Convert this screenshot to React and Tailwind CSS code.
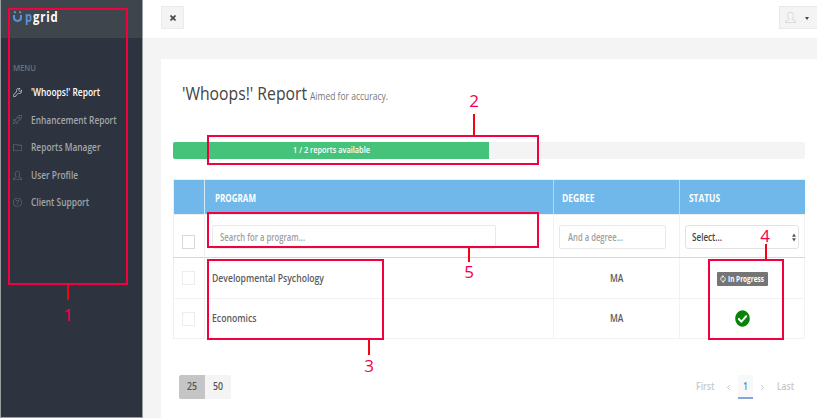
import { useLayoutEffect, useRef } from "react";
import { FaCheckCircle, FaTimes } from "react-icons/fa";
import { SlWrench, SlRocket, SlFolder, SlUser, SlQuestion } from "react-icons/sl";

/* Condenses a line of text horizontally to the given width. */
function Fit({ w, className = "", children }) {
  const ref = useRef(null);
  useLayoutEffect(() => {
    const el = ref.current;
    el.style.transform = "none";
    el.style.transform = `scaleX(${w / el.getBoundingClientRect().width})`;
  }, [w]);
  return (
    <span className={`block shrink-0 whitespace-nowrap ${className}`} style={{ width: w }}>
      <span ref={ref} className="inline-block origin-left">{children}</span>
    </span>
  );
}

const menu = [
  { Icon: SlWrench, label: "'Whoops!' Report", w: 69, active: true },
  { Icon: SlRocket, label: "Enhancement Report", w: 85.5 },
  { Icon: SlFolder, label: "Reports Manager", w: 69.5 },
  { Icon: SlUser, label: "User Profile", w: 47 },
  { Icon: SlQuestion, label: "Client Support", w: 58 },
];

function Sidebar() {
  return (
    <aside className="flex w-[143px] shrink-0 flex-col border-x border-b border-[#9b9da1] bg-[#2d3440]">
      <div className="flex h-[38px] items-start bg-[#3e454d] pl-[12px] pt-[7px] text-[14px] font-bold leading-[20px]">
        <svg className="mr-[3px] mt-[4px] h-[11px] w-[9px] shrink-0" viewBox="0 0 9 11" fill="none" stroke="#5e90d8" strokeWidth="2">
          <path d="M1 4V6.5C1 11 8 11 8 6.5V4M.8 1.2H3M6 1.2H8.2" />
        </svg>
        <Fit w={7} className="text-[#5e90d8]">p</Fit>
        <Fit w={25.5} className="ml-[1px] tracking-[1px] text-white">grid</Fit>
      </div>
      <div className="pl-[12px] pt-[23px] text-[9.5px] font-semibold leading-[14px] text-[#6b7078]">
        <Fit w={23}>MENU</Fit>
      </div>
      <nav className="flex flex-col pt-[3.5px] text-[11px] font-semibold">
        {menu.map(({ Icon, label, w, active }) => (
          <div key={label} className={`flex h-[27.6px] items-center pl-[12px] ${active ? "text-white" : "text-[#a3a6aa]"}`}>
            <Icon className={`mr-[9px] size-[9px] shrink-0 ${active ? "text-[#e0e2e5]" : "text-[#6a6f78]"}`} />
            <Fit w={w}>{label}</Fit>
          </div>
        ))}
      </nav>
    </aside>
  );
}

function Check({ strong }) {
  return <div className={`h-[14px] w-[13px] border bg-white ${strong ? "border-[#d9d9d9]" : "border-[#ededed]"}`} />;
}

function TopBar() {
  return (
    <header className="flex h-[38px] shrink-0 items-start justify-between bg-white pl-[18px] pt-[6px]">
      <div className="flex h-[23px] w-[23px] items-center justify-center border border-[#ebebeb] bg-[#f4f4f4]">
        <FaTimes className="h-[8px] w-[8px] text-[#4a4a4a]" stroke="#4a4a4a" strokeWidth="30" />
      </div>
      <div className="flex h-[23px] w-[38px] items-center border border-r-0 border-[#e9e9e9] bg-[#f4f4f4] pl-[5px]">
        <SlUser className="size-[11px] text-[#d2d2d2]" />
        <span className="ml-[9px] mt-px border-x-[2.5px] border-t-[3px] border-x-transparent border-t-[#444]" />
      </div>
    </header>
  );
}

const grid = "grid grid-cols-[32px_349px_126px_125px]";

function DataTable() {
  return (
    <div className="mt-[20px] text-[11px] font-semibold text-[#5c5c5c]">
      <div className={`${grid} h-[36px] w-[632px] border-y border-[#eee] bg-[#70b7ea] text-[10px] font-bold text-white`}>
        <div className="border-x border-r-[#d5e8f6] border-l-[#eee]" />
        <div className="flex items-center border-r border-[#b5d8f2] pl-[10px] pt-[2px]"><Fit w={41}>PROGRAM</Fit></div>
        <div className="flex items-center border-r border-[#b5d8f2] pl-[8px] pt-[2px]"><Fit w={32.5}>DEGREE</Fit></div>
        <div className="flex items-center pl-[9px] pt-[2px]"><Fit w={31}>STATUS</Fit></div>
      </div>
      <div className={`${grid} h-[43px] w-[632px] border-b border-[#d8d8d8]`}>
        <div className="border-x border-[#eee] pl-[8px] pt-[20px]"><Check strong /></div>
        <div className="border-r border-[#f2f2f2] pl-[7px] pt-[10px]">
          <div className="flex h-[24px] w-[284px] items-center rounded-[2px] border border-[#e9e9e9] pl-[7px] pt-[1px] text-[10.5px] text-[#a0a0a0]"><Fit w={85}>Search for a program...</Fit></div>
        </div>
        <div className="border-r border-[#f2f2f2] pl-[5px] pt-[10px]">
          <div className="flex h-[24px] w-[107px] items-center rounded-[2px] border border-[#e9e9e9] pl-[8px] pt-[1px] text-[10.5px] text-[#a0a0a0]"><Fit w={55}>And a degree...</Fit></div>
        </div>
        <div className="border-r border-[#f2f2f2] pl-[5px] pt-[10px]">
          <div className="flex h-[24px] w-[114px] items-center justify-between rounded-[3px] border border-[#e2e2e2] pl-[6px] pr-[2px] text-[#444]">
            <Fit w={30}>Select...</Fit>
            <svg className="h-[9px] w-[4px]" viewBox="0 0 5 10" fill="#555"><path d="M0 4L2.5 0L5 4ZM0 6H5L2.5 10Z" /></svg>
          </div>
        </div>
      </div>
      {[["Developmental Psychology", 112, false], ["Economics", 44.5, true]].map(([name, w, done]) => (
        <div key={name} className={`${grid} w-[632px] border-b border-[#f2f2f2] ${done ? "h-[40px]" : "h-[41px]"}`}>
          <div className="flex items-center border-x border-[#eee] pl-[8px]"><Check /></div>
          <div className="flex items-center border-r border-[#f2f2f2] pl-[7px]"><Fit w={w}>{name}</Fit></div>
          <div className="flex items-center justify-center border-r border-[#f2f2f2]"><Fit w={13.5}>MA</Fit></div>
          <div className="flex items-center justify-center border-r border-[#f2f2f2]">
            {done ? <FaCheckCircle className="h-[17px] w-[15px] text-[#078407]" preserveAspectRatio="none" /> : (
              <div className="mt-[2px] flex h-[14px] w-[51px] items-center rounded-[1px] bg-[#757575] pl-[3px] text-[8.5px] font-bold text-white">
                <svg className="mr-[2px] h-[8px] w-[6px] shrink-0" viewBox="0 0 6 8" fill="none" stroke="white" strokeWidth=".9">
                  <path d="M3.6 1.5C.8 1 .1 4 1.4 5.7M2.4 .2L3.8 1.5L2.4 2.8M2.4 6.5C5.2 7 5.9 4 4.6 2.3M3.6 5.2L2.2 6.5L3.6 7.8" />
                </svg>
                <Fit w={36}>In Progress</Fit>
              </div>
            )}
          </div>
        </div>
      ))}
    </div>
  );
}

function Footer() {
  return (
    <div className="mt-[36px] flex items-start justify-between pl-[6px] pr-[11px] text-[10.5px] font-semibold">
      <div className="flex h-[24px] overflow-hidden rounded-[2px] text-[#555]">
        <div className="flex w-[26px] items-center justify-center bg-[#c5c5c5]"><Fit w={10}>25</Fit></div>
        <div className="flex w-[26px] items-center justify-center bg-[#f4f4f4]"><Fit w={10}>50</Fit></div>
      </div>
      <div className="flex h-[24px] items-center text-[#c8c8c8]">
        <Fit w={18.5}>First</Fit>
        <svg className="ml-[13px] h-[5px] w-[3px]" viewBox="0 0 3 5" fill="none" stroke="#bbb" strokeWidth=".9"><path d="M2.7 .3L.5 2.5L2.7 4.7" /></svg>
        <div className="ml-[8px] flex h-[24px] w-[15px] items-center justify-center border-b-2 border-[#7fa6dd] bg-[#f8f8f8] pt-[1px] text-[#5b8fd5]"><Fit w={5}>1</Fit></div>
        <svg className="ml-[8px] h-[5px] w-[3px]" viewBox="0 0 3 5" fill="none" stroke="#bbb" strokeWidth=".9"><path d="M.3 .3L2.5 2.5L.3 4.7" /></svg>
        <Fit w={17} className="ml-[13px]">Last</Fit>
      </div>
    </div>
  );
}

const box = "absolute border-2 border-[#f5003f]";
const line = "absolute w-[2px] bg-[#fa0014]";
const num = "absolute w-[10px] text-center text-[17px] leading-[20px] text-[#f5004a]";

function Annotations() {
  return (
    <div className="pointer-events-none absolute inset-0">
      <div className={`${box} left-[8px] top-[8px] h-[277px] w-[120px]`} />
      <div className={`${line} left-[67px] top-[285px] h-[15px]`} />
      <div className={`${num} left-[63px] top-[305px]`}>1</div>
      <div className={`${box} left-[207px] top-[135px] h-[30px] w-[332px]`} />
      <div className={`${line} left-[473px] top-[114px] h-[21px]`} />
      <div className={`${num} left-[469px] top-[91px]`}>2</div>
      <div className={`${box} left-[207px] top-[212px] h-[36px] w-[332px]`} />
      <div className={`${line} left-[468px] top-[248px] h-[14px]`} />
      <div className={`${num} left-[464px] top-[262px]`}>5</div>
      <div className={`${box} left-[207px] top-[259px] h-[81px] w-[177px]`} />
      <div className={`${line} left-[368px] top-[340px] h-[15px]`} />
      <div className={`${num} left-[364px] top-[356px]`}>3</div>
      <div className={`${box} left-[708px] top-[259px] h-[81px] w-[76px]`} />
      <div className={`${line} left-[765px] top-[244px] h-[15px]`} />
      <div className={`${num} left-[760px] top-[226px]`}>4</div>
    </div>
  );
}

export default function App() {
  return (
    <div className="relative flex h-[418px] w-[817px] overflow-hidden bg-[#f4f4f4] font-['Open_Sans','Noto_Sans',sans-serif]">
      <Sidebar />
      <div className="flex min-w-0 flex-1 flex-col">
        <TopBar />
        <main className="ml-[18px] mt-[21px] flex-1 bg-white pl-[12px] pr-[12px]">
          <div className="flex items-baseline pl-[9px] pt-[22px]">
            <Fit w={125} className="text-[18px] leading-[25px] text-[#444]">'Whoops!' Report</Fit>
            <Fit w={78} className="ml-[3px] text-[10.5px] text-[#777]">Aimed for accuracy.</Fit>
          </div>
          <div className="mt-[36px] h-[17px] w-[632px] overflow-hidden rounded-[2px] bg-[#f4f4f4]">
            <div className="flex h-full w-[316px] items-center justify-center bg-[#46c37b] text-[9.5px] font-semibold text-white"><Fit w={77}>1 / 2 reports available</Fit></div>
          </div>
          <DataTable />
          <Footer />
        </main>
      </div>
      <Annotations />
    </div>
  );
}
